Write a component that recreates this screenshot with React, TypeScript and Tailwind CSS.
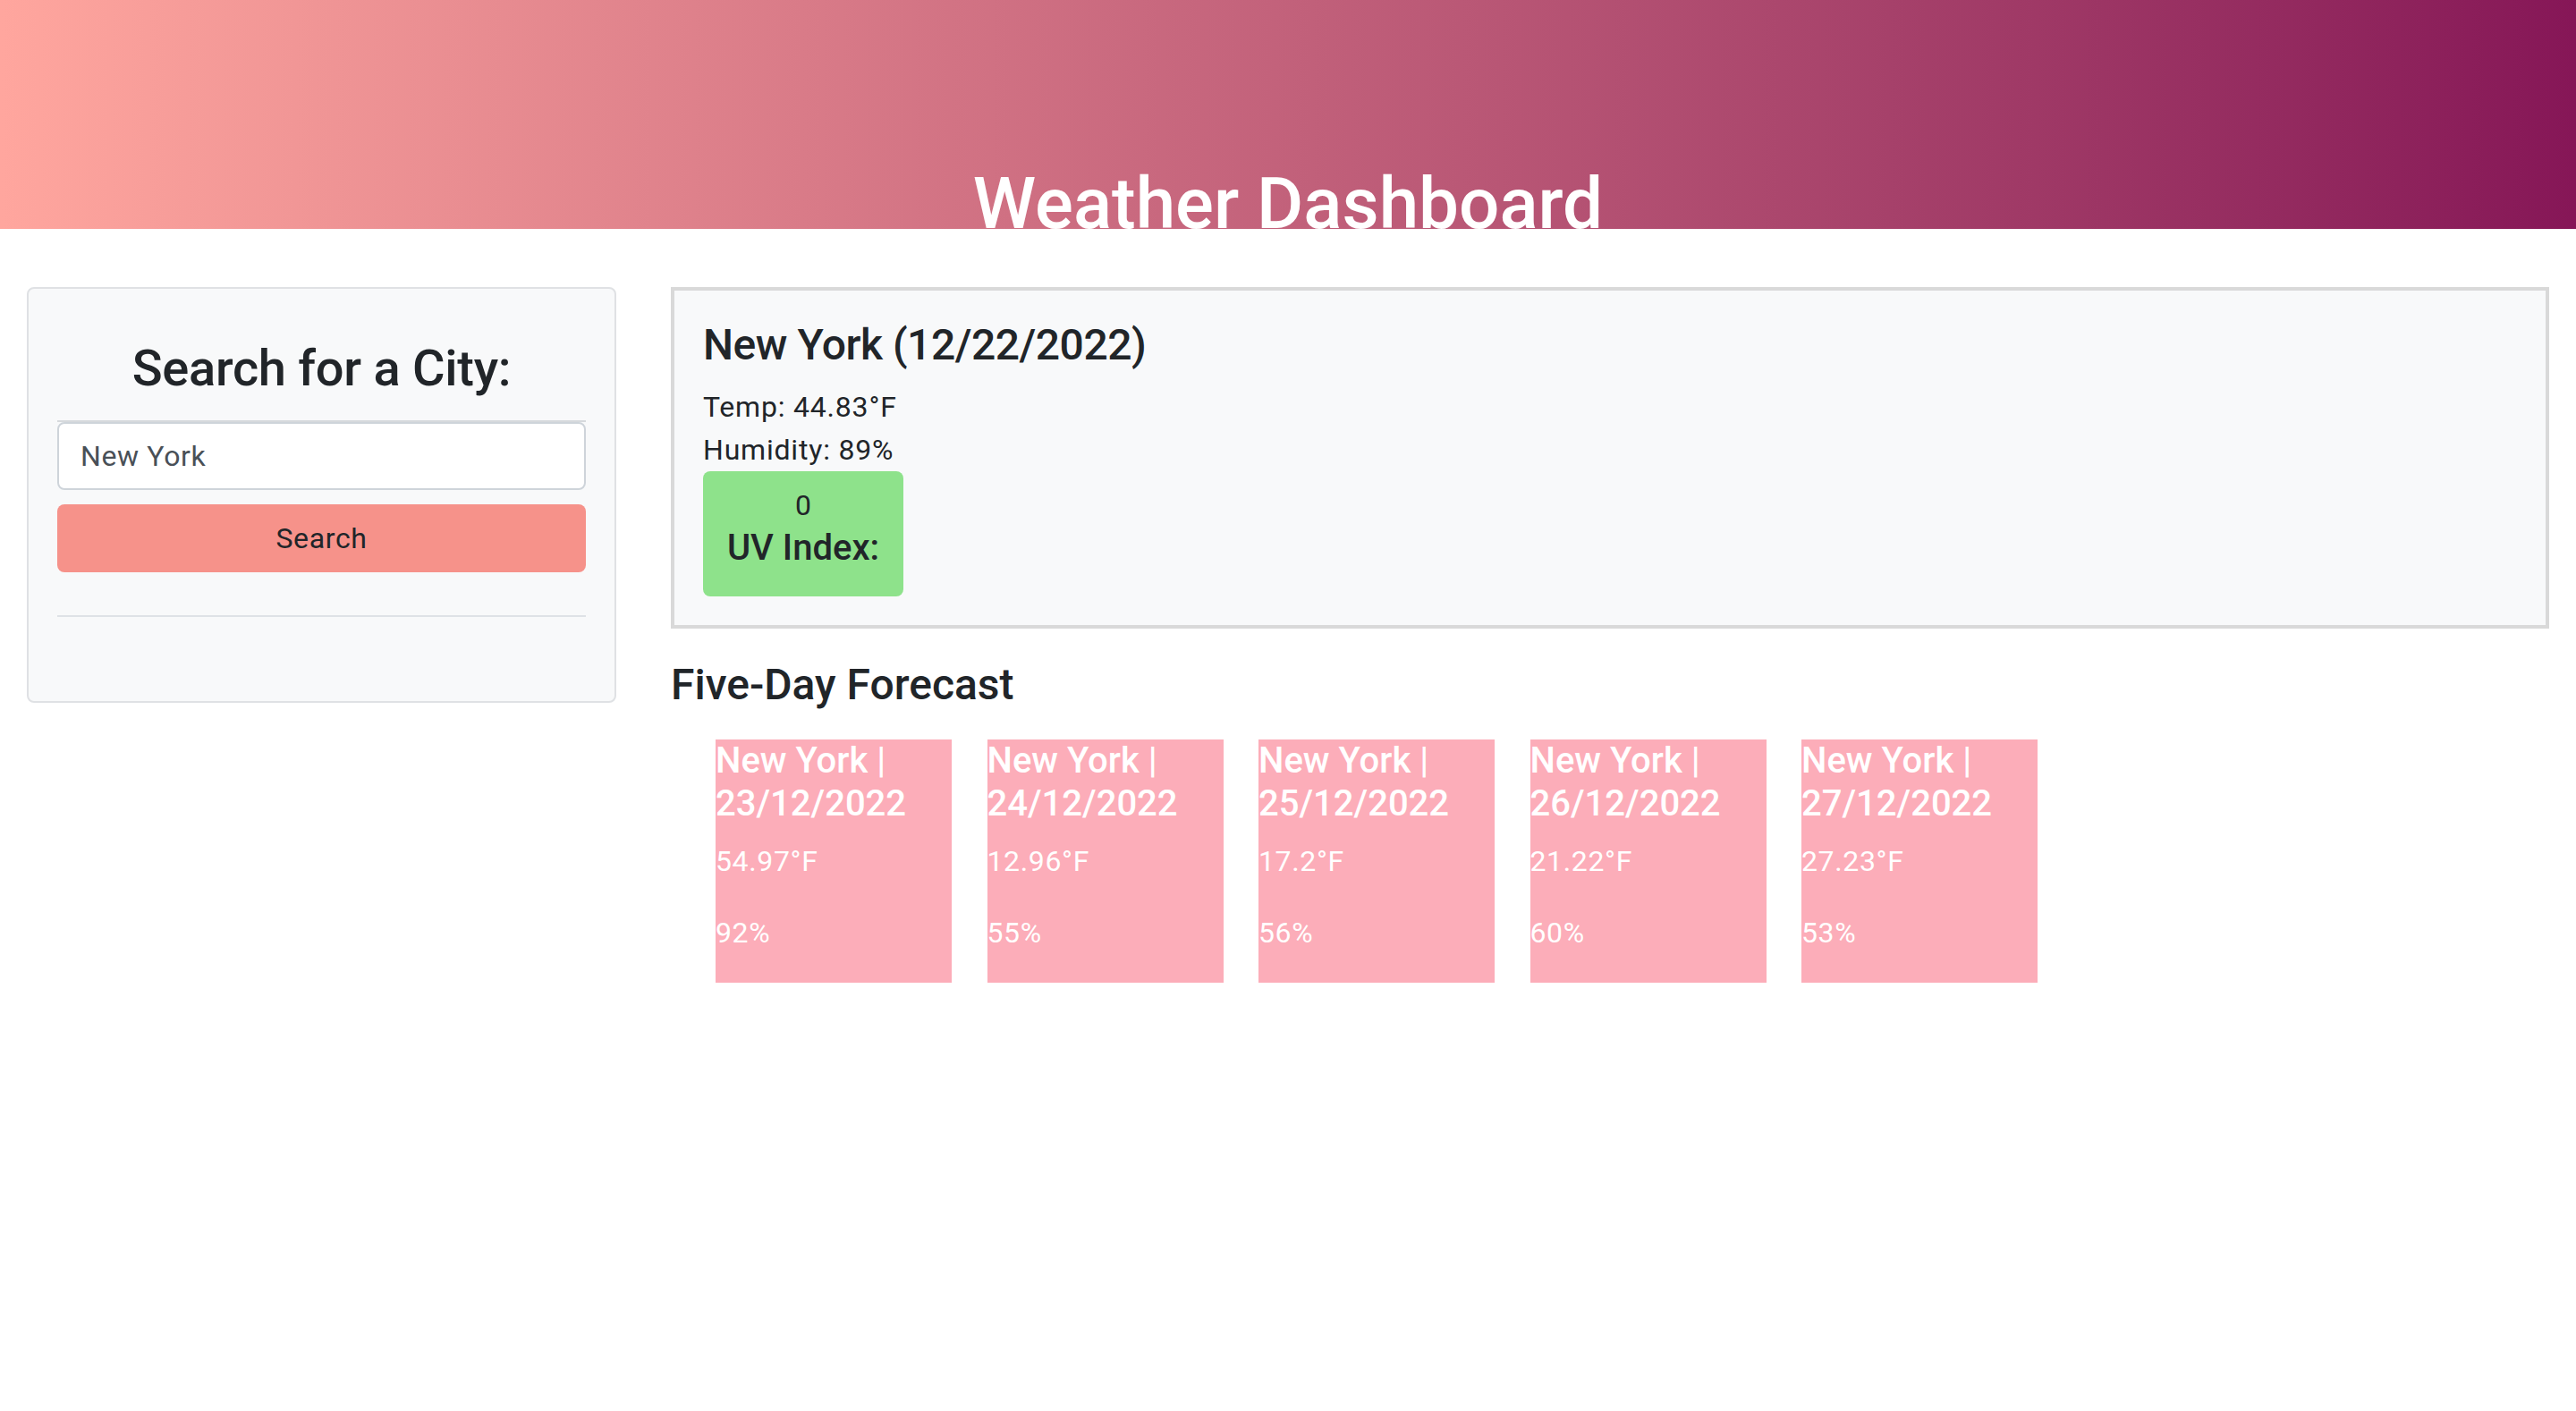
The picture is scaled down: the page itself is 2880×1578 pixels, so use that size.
import React from "react";

const forecast = [
  { date: "23/12/2022", temp: "54.97°F", hum: "92%" },
  { date: "24/12/2022", temp: "12.96°F", hum: "55%" },
  { date: "25/12/2022", temp: "17.2°F", hum: "56%" },
  { date: "26/12/2022", temp: "21.22°F", hum: "60%" },
  { date: "27/12/2022", temp: "27.23°F", hum: "53%" },
];

export default function App() {
  return (
    <div className="min-h-[1578px] bg-white font-['Roboto',sans-serif] text-[#212529]">
      <header className="h-[256px] overflow-hidden bg-gradient-to-r from-[#ffa69e] to-[#861657] flex items-end justify-center">
        <h1 className="text-[80px] leading-[80px] font-medium text-white mb-[-12px]">Weather Dashboard</h1>
      </header>

      <div className="flex pt-[65px] pl-[30px] pr-[30px] gap-[61px] items-start">
        <aside className="w-[659px] shrink-0 h-[465px] border-2 border-[#dfe1e4] rounded-[8px] bg-[#f8f9fa] px-[32px] pt-[56px]">
          <h3 className="text-[56px] leading-[1.2] font-medium text-center tracking-[-0.005em]">Search for a City:</h3>
          <hr className="mt-[24px] border-0 border-t-2 border-[#d6d9dc]" />
          <input
            readOnly
            value="New York"
            className="block w-full h-[76px] border-2 border-[#ced4da] rounded-[8px] bg-white px-[24px] text-[32px] tracking-[0.02em] text-[#495057] outline-none"
          />
          <button className="mt-[16px] w-full h-[76px] rounded-[8px] bg-[#f6928a] text-[32px] tracking-[0.02em] text-[#212529]">Search</button>
          <hr className="mt-[48px] border-0 border-t-2 border-[#dee2e6]" />
        </aside>

        <main className="flex-1">
          <section className="border-4 border-[#d9d9d9] bg-[#f8f9fa] p-[32px]">
            <h4 className="text-[48px] leading-[1.2] font-medium mb-[16px] tracking-[-0.01em]">New York (12/22/2022)</h4>
            <p className="text-[32px] leading-[1.5] tracking-[0.025em]">Temp: 44.83°F</p>
            <p className="text-[32px] leading-[1.5] tracking-[0.025em]">Humidity: 89%</p>
            <div className="w-[224px] rounded-[8px] bg-[#8ee28b] pt-[14px] pb-[14px] text-center">
              <p className="text-[32px] leading-[1.5]">0</p>
              <h5 className="text-[40px] leading-[1.2] font-medium mb-[16px]">UV Index:</h5>
            </div>
          </section>

          <h4 className="mt-[34px] text-[48px] leading-[1.2] font-medium">Five-Day Forecast</h4>

          <div className="mt-[33px] ml-[50px] flex gap-[39.5px]">
            {forecast.map((d) => (
              <div key={d.date} className="w-[264px] bg-[#fcadb9] text-white">
                <h5 className="text-[40px] leading-[1.2] font-medium mb-[16px]">
                  New York |<br />
                  {d.date}
                </h5>
                <p className="text-[32px] leading-[1.5] mb-[32px] tracking-[0.02em]">{d.temp}</p>
                <p className="text-[32px] leading-[1.5] mb-[32px] tracking-[0.02em]">{d.hum}</p>
              </div>
            ))}
          </div>
        </main>
      </div>
    </div>
  );
}
